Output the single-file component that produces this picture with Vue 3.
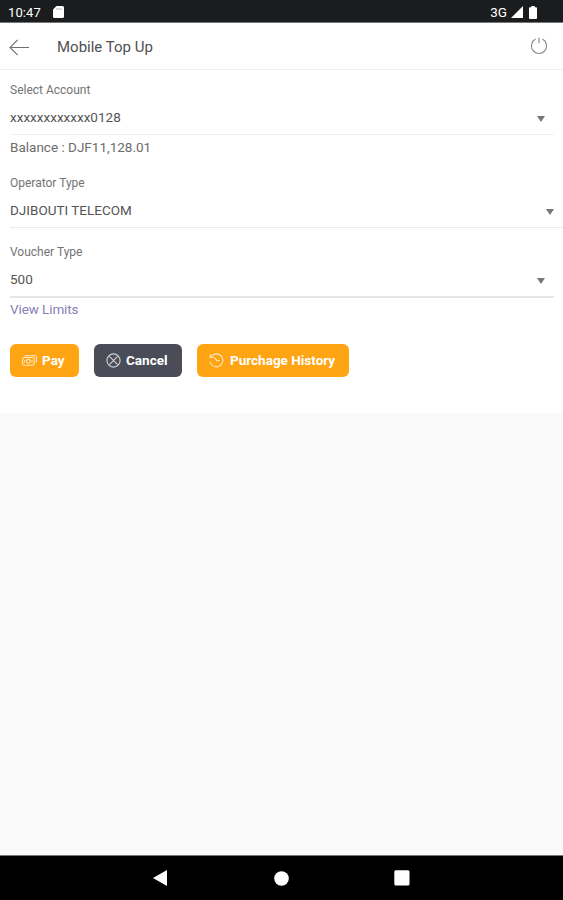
<script setup>
import { ref } from 'vue'

const fields = ref([
  { key: 'account', label: 'Select Account', value: 'xxxxxxxxxxxx0128', note: 'Balance : DJF11,128.01' },
  { key: 'operator', label: 'Operator Type', value: 'DJIBOUTI TELECOM' },
  { key: 'voucher', label: 'Voucher Type', value: '500', link: 'View Limits' },
])
</script>

<template>
  <div class="screen">
    <div class="status-bar">
      <span class="clock">10:47</span>
      <svg class="sd-card" width="11" height="12" viewBox="0 0 11 12">
        <path d="M3.5 0H9.5Q11 0 11 1.5V10.5Q11 12 9.5 12H1.5Q0 12 0 10.5V3.5Z" fill="#fff" />
        <path d="M4 2v2M6 2v2M8 2v2" stroke="#999" stroke-width="0.7" />
      </svg>
      <span class="network">3G</span>
      <svg class="signal" width="12" height="12" viewBox="0 0 12 12">
        <path d="M12 0V12H0Z" fill="#fff" />
      </svg>
      <svg class="battery" width="8" height="13" viewBox="0 0 8 13">
        <path d="M2.3 0h3.4v1.3H7q1 0 1 1V12q0 1-1 1H1q-1 0-1-1V2.3q0-1 1-1h1.3Z" fill="#fff" />
      </svg>
    </div>

    <header class="app-bar">
      <button type="button" class="icon-button" aria-label="Back">
        <svg width="21" height="17" viewBox="0 0 21 17" fill="none" stroke="#707070" stroke-width="1.1">
          <path d="M20 8.5H1M8.7 0.8L1 8.5L8.7 16.2" />
        </svg>
      </button>
      <h1>Mobile Top Up</h1>
      <button type="button" class="icon-button power" aria-label="Log out">
        <svg width="18" height="18" viewBox="0 0 18 18" fill="none" stroke="#888" stroke-width="1.1">
          <path d="M5.6 2.1A7.6 7.6 0 1 0 12.4 2.1M9 0.5V6.2" />
        </svg>
      </button>
    </header>

    <main class="form">
      <div v-for="field in fields" :key="field.key" class="field" :class="field.key">
        <label>{{ field.label }}</label>
        <div class="select">
          <span class="value">{{ field.value }}</span>
          <svg width="8" height="6" viewBox="0 0 8 6"><path d="M0 0H8L4 6Z" fill="#777" /></svg>
        </div>
        <p v-if="field.note" class="note">{{ field.note }}</p>
        <a v-if="field.link" class="note link">{{ field.link }}</a>
      </div>

      <div class="actions">
        <button type="button" class="action pay">
          <svg width="15" height="11" viewBox="0 0 15 11" fill="none" stroke="#fff" stroke-width="1.1">
            <rect x="0.6" y="2.5" width="11.6" height="7.7" rx="1.8" />
            <path d="M2.3 0.7H12.6Q14.4 0.7 14.4 2.5V7.5M2.8 5v2.5M10 5v2.5" />
            <circle cx="6.4" cy="6.3" r="1.9" />
          </svg>
          <span>Pay</span>
        </button>
        <button type="button" class="action cancel">
          <svg width="15" height="15" viewBox="0 0 15 15" fill="none" stroke="#fff" stroke-width="1.1">
            <circle cx="7.5" cy="7.5" r="6.6" />
            <path d="M3.4 3.4L11.6 11.6M11.6 3.4L3.4 11.6" />
          </svg>
          <span>Cancel</span>
        </button>
        <button type="button" class="action history">
          <svg width="15" height="15" viewBox="0 0 15 15" fill="none" stroke="#fff" stroke-width="1.1">
            <path d="M2 3.7A6.5 6.5 0 1 1 1 8.5M1.2 1.2V4.5H4.6M5.2 4.6L8 7.6H10.6" />
          </svg>
          <span>Purchage History</span>
        </button>
      </div>
    </main>

    <nav class="nav-bar">
      <svg width="14" height="16" viewBox="0 0 14 16"><path d="M14 0V16L0 8Z" fill="#fff" /></svg>
      <svg class="home" width="15" height="15" viewBox="0 0 15 15"><circle cx="7.5" cy="7.5" r="7.3" fill="#fff" /></svg>
      <svg width="16" height="16" viewBox="0 0 16 16"><rect x="0.3" y="0.3" width="15.2" height="15.2" rx="1.5" fill="#fff" /></svg>
    </nav>
  </div>
</template>

<style>
body {
  margin: 0;
}
</style>

<style scoped>
.screen {
  display: flex;
  flex-direction: column;
  width: 563px;
  height: 900px;
  overflow: hidden;
  background: #fafafa;
  color: #555;
  font-family: Roboto, sans-serif;
}

.status-bar {
  display: flex;
  flex: none;
  align-items: center;
  box-sizing: border-box;
  height: 23px;
  padding: 2px 26px 0 8px;
  border-bottom: 1px solid #77787a;
  background: #1b1c1e;
  color: #fff;
}

.clock {
  width: 45px;
  font-size: 13px;
  letter-spacing: 0.1px;
}

.network {
  margin-left: auto;
  font-size: 13.5px;
}

.signal {
  margin-left: 4px;
}

.battery {
  margin-left: 6px;
}

.app-bar {
  display: flex;
  flex: none;
  align-items: center;
  box-sizing: border-box;
  height: 47px;
  padding: 2px 15px 0 9px;
  border-bottom: 1px solid #eee;
  background: #fff;
}

.icon-button {
  display: flex;
  padding: 0;
  border: none;
  background: none;
}

.power {
  margin: 0 0 3px auto;
}

h1 {
  margin: 0 0 0 27px;
  color: #505050;
  font-size: 15px;
  font-weight: 400;
}

.form {
  flex: none;
  box-sizing: border-box;
  height: 343px;
  padding: 10px 0 0 10px;
  background: #fff;
}

.field {
  margin-right: 9px;
}

.field label {
  display: block;
  color: #747474;
  font-size: 12px;
  line-height: 20px;
}

.select {
  display: flex;
  align-items: center;
  justify-content: space-between;
  box-sizing: border-box;
  height: 35px;
  padding: 2px 9px 0 0;
  border-bottom: 1px solid #f0f0f0;
}

.select svg {
  margin-top: 2px;
}

.value {
  margin-bottom: 2px;
  font-size: 13.5px;
}

.note {
  display: block;
  margin: 0;
  color: #6c6c6c;
  font-size: 13.5px;
  line-height: 24px;
}

.operator {
  margin: 14px 0 0;
}

.operator .select {
  border-bottom-color: #ebebeb;
}

.voucher {
  margin-top: 14px;
}

.voucher .select {
  height: 36px;
  border-bottom: 2px solid #e6e6e6;
}

.link {
  color: #8680b5;
  line-height: 22px;
  letter-spacing: -0.1px;
}

.actions {
  display: flex;
  gap: 15px;
  margin-top: 24px;
}

.action {
  display: flex;
  align-items: center;
  box-sizing: border-box;
  height: 33px;
  padding: 0 12px;
  border: none;
  border-radius: 6px;
  background: #ffa412;
  color: #fff;
  font: 700 13.5px Roboto, sans-serif;
  white-space: nowrap;
}

.action svg {
  flex: none;
  margin-right: 5px;
  opacity: 0.75;
}

.action span {
  margin-bottom: 2px;
}

.pay {
  width: 69px;
}

.cancel {
  width: 88px;
  background: #4a4c58;
}

.history {
  width: 152px;
}

.history svg {
  margin-right: 6px;
}

.nav-bar {
  display: flex;
  align-items: center;
  box-sizing: border-box;
  height: 45px;
  margin-top: auto;
  padding: 0 153px;
  justify-content: space-between;
  border-top: 1px solid #777;
  background: #000;
}

.home {
  margin-left: 2px;
}
</style>
